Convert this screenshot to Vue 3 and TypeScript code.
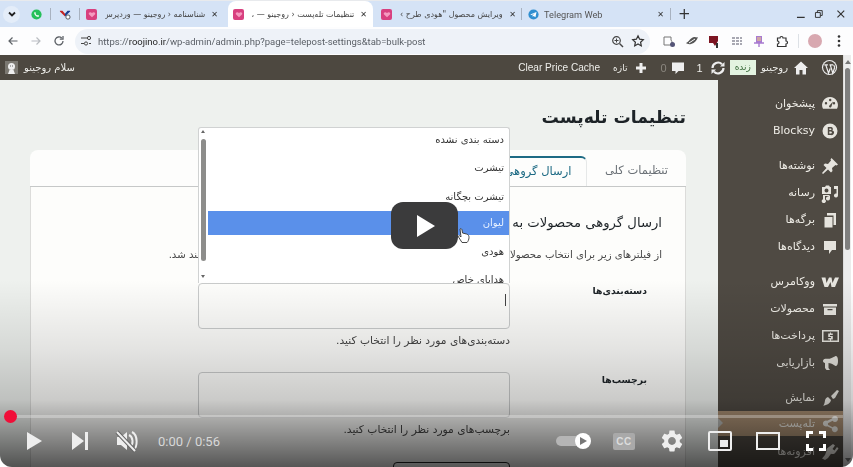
<script setup lang="ts">
interface MenuItem { label: string; d: string; active?: boolean; gap?: boolean }

const menu: MenuItem[] = [
  { label: 'پیشخوان', d: 'M10 3a8 8 0 0 0-7 11.800h14A8 8 0 0 0 10 3zM6 8a1.200 1.200 0 1 1 0 2.400A1.200 1.200 0 0 1 6 8zm3-2a1.200 1.200 0 1 1 2.400 0A1.200 1.200 0 0 1 9 6zm1.800 7.500a1.300 1.300 0 0 1-1.800-1.400L13 7.500l-1.500 5zM14 8a1.200 1.200 0 1 1 0 2.400A1.200 1.200 0 0 1 14 8z' },
  { label: 'Blocksy', d: 'M10 2.500a7.500 7.500 0 1 0 0 15 7.500 7.500 0 0 0 0-15zM7.800 6h3.200a2 2 0 0 1 1.300 3.400A2.200 2.200 0 0 1 11 14H7.800V6zm1.500 1.400v1.700h1.300a.85.85 0 0 0 0-1.700H9.300zm0 3v2.200h1.500a1.100 1.100 0 0 0 0-2.200H9.300z' },
  { label: 'نوشته‌ها', gap: true, d: 'M11.500 2l6.500 6.500-1.500 1-1-.5-3.500 3 .5 3-1.500 1.500-3-3L3 18l-1-1 4.500-5-3-3L5 7.500l3 .5 3-3.500-.5-1z' },
  { label: 'رسانه', d: 'M2 4h3l1-1.500h3L10 4h1v7H2V4zm4.500 1.500a2 2 0 1 0 0 4 2 2 0 0 0 0-4zM14 3h4v9.500a2 2 0 1 1-1.500-2V6H14V3zM3 12h6l1 1v2.500a2 2 0 1 1-1.500-2V13H5v3.500a2 2 0 1 1-2-.2V12z' },
  { label: 'برگه‌ها', d: 'M7 3h9v12h-2.500V5.500H7V3zM4.500 7h8v10.500h-8V7z' },
  { label: 'دیدگاه‌ها', d: 'M4 4h12v9h-4l-3 4v-4H4V4z' },
  { label: 'ووکامرس', gap: true, d: 'M1.500 5.500H5.500L6.500 11 9 5.500h2.500l1 5.500L15 5.500h4L15 15h-3.500l-1-5L8 15H4.500z' },
  { label: 'محصولات', d: 'M3 5h14v2.500H3V5zm1 3.500h12V16H4V8.500zm3.500 1.500v1.200h5V10h-5z' },
  { label: 'پرداخت‌ها', d: 'M2 4h17v12H2V4zm1.500 1.500v9h14v-9h-14zM10 6.500h1v1h1.800V9H10v1h2.800v3.500H11v1h-1v-1H8.200V12H11v-1H8.200V7.500H10v-1z' },
  { label: 'بازاریابی', d: 'M16 3c1.300 0 2 2.300 2 5s-.7 5-2 5c-1 0-4-2.700-7.500-3V15l1.500 2H6.500L5 15v-5C3.800 9.800 3 9 3 8s1-2.200 2.300-2.200h3.200C12 5.700 15 3 16 3z' },
  { label: 'نمایش', gap: true, d: 'M11 8l6-6 2 1-4 7-2 1-2-3zM8 9l3 3c-.5 3-4 5.500-8 5.500 1.500-1 1.500-2.500 2-5 .3-1.800 1.500-3 3-3.500z' },
  { label: 'تله‌پست', active: true, d: 'M15 2a3 3 0 1 1-2.400 4.800L7.900 9.200a3 3 0 0 1 0 1.600l4.700 2.400a3 3 0 1 1-.7 1.400l-4.700-2.400a3 3 0 1 1 0-5.400l4.700-2.400A3 3 0 0 1 15 2z' },
  { label: 'افزونه‌ها', d: 'M13 2l2 1.500-2.500 3.500 2 1.500L17 5l1.500 1.500-3 4c-1 1.500-3 2-4.500 1.200L8 16l-3 2-3-1.500L5 13l1.500-4c-.5-1 0-2 1-3L13 2z' },
]

const options: { label: string; selected?: boolean }[] = [
  { label: 'دسته بندی نشده' },
  { label: 'تیشرت' },
  { label: 'تیشرت بچگانه' },
  { label: 'لیوان', selected: true },
  { label: 'هودی' },
  { label: 'هدایای خاص' },
]
</script>

<template>
  <div class="root">
    <div class="screen">
      <div class="tabstrip">
        <span class="tablist-btn"><svg width="10" height="10" viewBox="0 0 10 10"><path d="M2 3.500l3 3 3-3" fill="none" stroke="#222" stroke-width="1.800" /></svg></span>
        <span class="pinned first">
          <svg width="11" height="11" viewBox="0 0 14 14"><circle cx="7" cy="7" r="6.500" fill="#25c05a" /><path d="M4.500 4c1-1 1.500.5 1.800 1.300l-.6.8c.5 1 1.200 1.700 2.200 2.200l.8-.7c.8.300 2.200 1 1.300 2-1.800 1.500-7.300-3-5.500-5.600z" fill="#fff" /></svg>
        </span>
        <span class="sep"></span>
        <span class="pinned">
          <svg width="12" height="11" viewBox="0 0 14 13"><path d="M1 11V2l3 0 3 3.500V9L1 3z" fill="#c5221f" /><path d="M13 11V2h-3L7 5.500V9l6-6z" fill="#1a3d8f" /><circle cx="10.500" cy="9.500" r="2.500" fill="#fff" stroke="#444" /></svg>
        </span>
        <span class="sep"></span>
        <div class="tab t1">
          <span class="fav"><svg width="8" height="7" viewBox="0 0 11 10"><path d="M5.500 9L1 4.500C0 2 3.500.5 5.500 3c2-2.500 5.500-1 4.500 1.500z" fill="#f59ac0" /></svg></span>
          <span class="tab-title">شناسنامه ‹ روجینو — وردپرس</span>
          <span class="x">✕</span>
        </div>
        <div class="tab active">
          <span class="fav"><svg width="8" height="7" viewBox="0 0 11 10"><path d="M5.500 9L1 4.500C0 2 3.500.5 5.500 3c2-2.500 5.500-1 4.500 1.500z" fill="#f59ac0" /></svg></span>
          <span class="tab-title">تنظیمات تله‌پست ‹ روجینو — ،</span>
          <span class="x">✕</span>
        </div>
        <div class="tab t3">
          <span class="fav"><svg width="8" height="7" viewBox="0 0 11 10"><path d="M5.500 9L1 4.500C0 2 3.500.5 5.500 3c2-2.500 5.500-1 4.500 1.500z" fill="#f59ac0" /></svg></span>
          <span class="tab-title">ویرایش محصول "هودی طرح ›</span>
          <span class="x">✕</span>
        </div>
        <span class="sep"></span>
        <div class="tab t4">
          <svg width="11" height="11" viewBox="0 0 14 14"><circle cx="7" cy="7" r="6.500" fill="#2f8fd0" /><path d="M2.800 7l8-3.200-1.300 6.700-2.300-1.700-1.200 1.200-.2-2.200 3.200-2.700-4 2.400z" fill="#fff" /></svg>
          <span class="tab-title ltr">Telegram Web</span>
          <span class="x">✕</span>
        </div>
        <span class="sep"></span>
        <span class="plus">+</span>
        <span class="winctl">
          <svg width="10" height="10" viewBox="0 0 10 10"><path d="M1 8.500h8" stroke="#333" stroke-width="1.300" /></svg>
          <svg width="10" height="10" viewBox="0 0 10 10"><path d="M1.500 3.500h5v5h-5zM3.500 3.500v-2h5v5h-2" fill="none" stroke="#333" /></svg>
          <svg width="10" height="10" viewBox="0 0 10 10"><path d="M1.500 1.500l7 7m0-7l-7 7" stroke="#333" stroke-width="1.200" /></svg>
        </span>
      </div>

      <div class="toolbar">
        <svg class="nav" width="14" height="14" viewBox="0 0 14 14"><path d="M11.500 7H3M6.500 3.500L3 7l3.500 3.500" fill="none" stroke="#5f6368" stroke-width="1.200" /></svg>
        <svg class="nav" width="14" height="14" viewBox="0 0 14 14"><path d="M2.500 7H11M7.500 3.500L11 7l-3.500 3.500" fill="none" stroke="#b9bcc1" stroke-width="1.200" /></svg>
        <svg class="nav" width="14" height="14" viewBox="0 0 14 14"><path d="M11 7A4 4 0 1 1 9.700 4M11 2v3.200H7.800" fill="none" stroke="#5f6368" stroke-width="1.300" /></svg>
        <div class="omnibox">
          <svg width="12" height="12" viewBox="0 0 12 12"><path d="M1 3h6M1 8.500h3M9 8.500h2" stroke="#444" stroke-width="1.200" /><circle cx="9" cy="3" r="1.600" fill="none" stroke="#444" /><circle cx="6" cy="8.500" r="1.600" fill="none" stroke="#444" /></svg>
          <span class="url">https://<b>roojino.ir</b>/wp-admin/admin.php?page=telepost-settings&amp;tab=bulk-post</span>
          <span class="omni-end">
            <svg width="13" height="13" viewBox="0 0 13 13"><circle cx="5.500" cy="5.500" r="3.800" fill="none" stroke="#444" stroke-width="1.200" /><path d="M8.500 8.500l3.500 3.500" stroke="#444" stroke-width="1.400" /><path d="M3.500 5.500h4M5.500 3.500v4" stroke="#444" /></svg>
            <svg width="14" height="14" viewBox="0 0 14 14"><path d="M7 1.800l1.600 3.400 3.700.5-2.700 2.500.7 3.700L7 10l-3.300 1.900.7-3.700L1.700 5.700l3.700-.5z" fill="none" stroke="#333" stroke-width="1.200" /></svg>
          </span>
        </div>
        <div class="exts">
          <svg width="14" height="14" viewBox="0 0 14 14"><path d="M2 3h7v3a3 3 0 0 1-3 5H2z" fill="none" stroke="#777" /><circle cx="10.500" cy="10.500" r="2.500" fill="#557" /></svg>
          <svg width="14" height="14" viewBox="0 0 14 14"><path d="M1 9c3-1 4-5 8-6 2 0 3 1 4 0-1 3-3 6-7 7-2 .5-4 0-5-1z" fill="#555" /><path d="M4 9l6-4" stroke="#fff" /></svg>
          <svg width="14" height="14" viewBox="0 0 14 14"><path d="M2 2h9v5l-3 5-2-3H2z" fill="#7d1522" /><rect x="9" y="9" width="2" height="5" fill="#333" /></svg>
          <svg width="14" height="14" viewBox="0 0 14 14"><path d="M2 4h10M2 7h10M2 10h10" stroke="#556" stroke-width="1.100" stroke-dasharray="3 1" /></svg>
          <svg width="14" height="14" viewBox="0 0 14 14"><path d="M4 2h6v7H4z" fill="#a87ad0" /><path d="M2 9h10M7 9v4" stroke="#a87ad0" stroke-width="1.400" /><path d="M5 4h4M5 6h4" stroke="#f4d37a" /></svg>
          <svg width="14" height="14" viewBox="0 0 14 14"><path d="M2.500 4H5a1.500 1.500 0 0 1 3 0h3v3a1.500 1.500 0 0 1 0 3v2.500H2.500V10a1.500 1.500 0 0 0 0-3z" fill="none" stroke="#333" stroke-width="1.200" /></svg>
        </div>
        <span class="tsep"></span>
        <span class="avatar"></span>
        <svg class="kebab" width="4" height="14" viewBox="0 0 4 14"><circle cx="2" cy="2.500" r="1.300" fill="#333" /><circle cx="2" cy="7" r="1.300" fill="#333" /><circle cx="2" cy="11.500" r="1.300" fill="#333" /></svg>
      </div>

      <div class="viewport">
        <div class="page">
          <div class="wpbar">
            <div class="wp-right">
              <svg class="wp-logo" width="17" height="17" viewBox="0 0 18 18"><circle cx="9" cy="9" r="8" fill="#eee" /><circle cx="9" cy="9" r="6.800" fill="#4d4840" /><path d="M3.500 6.200h3.800M9 6.200h4M5 6.200L8 15l1.700-5M9.800 6.200L12.500 15l1.800-5.500c.3-1.200-.2-2-.8-3" fill="none" stroke="#eee" stroke-width="1.300" /></svg>
              <svg class="home" width="16" height="16" viewBox="0 0 16 16"><path d="M8 1.500l7 6.500h-2v6.500H9.500V10h-3v4.500H3V8H1z" fill="#eee" /></svg>
              <span class="site">روجینو</span>
              <span class="live">زنده</span>
              <svg class="refresh" width="16" height="16" viewBox="0 0 16 16"><path d="M2.500 8a5.500 5.500 0 0 1 9.500-3.700M13.500 8A5.500 5.500 0 0 1 4 11.700" fill="none" stroke="#eee" stroke-width="2.200" /><path d="M14.500 2v4.500H10zM1.500 14V9.500H6z" fill="#eee" /></svg>
              <span class="count">1</span>
              <svg class="bubble" width="14" height="14" viewBox="0 0 14 14"><path d="M1 1.500h12v8.500H7.500L4.500 13v-3H1z" fill="#eee" /></svg>
              <span class="count zero">0</span>
              <svg class="plus-wp" width="14" height="14" viewBox="0 0 14 14"><path d="M7 2v10M2 7h10" stroke="#eee" stroke-width="3" /></svg>
              <span class="new">تازه</span>
              <span class="cache">Clear Price Cache</span>
            </div>
            <div class="wp-left">
              <span class="greet">سلام روجینو</span>
              <span class="wp-avatar"><svg width="13" height="13" viewBox="0 0 13 13"><rect width="13" height="13" fill="#7b7871" /><circle cx="6.500" cy="5.500" r="3.500" fill="#eee" /><path d="M3 13l1.500-4h4L10 13z" fill="#eee" /><path d="M5 5h.8M7.200 5H8" stroke="#444" /></svg></span>
            </div>
          </div>
          <div class="body">
            <main class="main">
              <h1 class="title">تنظیمات تله‌پست</h1>
              <div class="tabs">
                <span class="wptab">تنظیمات کلی</span>
                <span class="wptab on">ارسال گروهی</span>
              </div>
              <div class="card">
                <h2 class="h2">ارسال گروهی محصولات به تلگرام</h2>
                <p class="desc">از فیلترهای زیر برای انتخاب محصولات استفاده کنید. محصولات انتخاب‌شده خودکار به کانال تلگرام ارسال خواهند شد.</p>
                <div class="field">
                  <label class="flabel">دسته‌بندی‌ها</label>
                  <div class="fcontrol">
                    <div class="box"></div>
                    <p class="hint">دسته‌بندی‌های مورد نظر را انتخاب کنید.</p>
                  </div>
                </div>
                <div class="field">
                  <label class="flabel">برچسب‌ها</label>
                  <div class="fcontrol">
                    <div class="box"></div>
                    <p class="hint">برچسب‌های مورد نظر را انتخاب کنید.</p>
                    <div class="btnstub"></div>
                  </div>
                </div>
              </div>
            </main>
            <aside class="side">
              <div v-for="m in menu" :key="m.label" class="row" :class="{ gap: m.gap, on: m.active }">
                <svg class="mi" width="20" height="20" viewBox="0 0 20 20"><path :d="m.d" fill="#e6e4de" fill-rule="evenodd" /></svg>
                <span class="ml">{{ m.label }}</span>
              </div>
            </aside>
          </div>
        </div>
        <div class="sb">
          <span class="arr up"></span>
          <span class="thumb"></span>
          <span class="arr down"></span>
        </div>
      </div>

      <div class="dropdown">
        <div class="dd-sb">
          <span class="arr2 up"></span>
          <span class="thumb2"></span>
          <span class="arr2 down"></span>
        </div>
        <div class="dd-list">
          <div v-for="o in options" :key="o.label" class="opt" :class="{ sel: o.selected }">{{ o.label }}</div>
        </div>
      </div>
      <span class="caret"></span>
    </div>

    <div class="shade"></div>
    <div class="big-play"><svg width="20" height="22" viewBox="0 0 20 22"><path d="M1 0l18 11L1 22z" fill="#fff" /></svg></div>
    <svg class="hand" width="13" height="15" viewBox="0 0 13 15"><path d="M3 1c1-.8 1.800 0 2 1l.5 3 4 1c2 .5 2.500 2 2.500 3.500 0 2-1 4-2 5H5L1.500 9c-.5-1 .5-1.800 1.500-1L4 9z" fill="#fff" stroke="#333" stroke-width=".9" /></svg>

    <div class="progress"></div>
    <div class="scrubber"></div>
    <div class="controls">
      <div class="cgroup">
        <span class="cbtn"><svg width="36" height="36" viewBox="0 0 36 36"><path d="M11 9l15 9-15 9z" fill="#eee" /></svg></span>
        <span class="cbtn"><svg width="36" height="36" viewBox="0 0 36 36"><path d="M10 9l12 9-12 9z" fill="#eee" /><rect x="23" y="9" width="3" height="18" fill="#eee" /></svg></span>
        <span class="cbtn"><svg width="36" height="36" viewBox="0 0 36 36"><path d="M9 14h4l6-5v18l-6-5H9z" fill="#eee" /><path d="M21 12c4 2 5 9 1 12M24 9c6 3 6 15 1 19" fill="none" stroke="#eee" stroke-width="2" /><path d="M9 9l18 19" stroke="#666" stroke-width="4" /><path d="M9 9l18 19" stroke="#eee" stroke-width="2" /></svg></span>
        <span class="time">0:00 / 0:56</span>
      </div>
      <div class="cgroup">
        <span class="cbtn w"><span class="toggle"><span class="knob"><svg width="8" height="8" viewBox="0 0 8 8"><path d="M1 0l7 4-7 4z" fill="#777" /></svg></span></span></span>
        <span class="cbtn w"><span class="cc">CC</span></span>
        <span class="cbtn w"><svg width="26" height="26" viewBox="0 0 24 24"><path d="M19.140 12.940c.04-.3.06-.61.06-.94 0-.32-.02-.64-.07-.94l2.030-1.580c.18-.14.23-.41.12-.61l-1.920-3.320c-.12-.22-.37-.29-.59-.22l-2.390.96c-.5-.38-1.030-.7-1.620-.94l-.36-2.540c-.04-.24-.24-.41-.48-.41h-3.840c-.24 0-.43.17-.47.41l-.36 2.540c-.59.24-1.130.57-1.620.94l-2.390-.96c-.22-.08-.47 0-.59.22L2.740 8.870c-.12.21-.08.47.12.61l2.030 1.580c-.05.3-.09.63-.09.94s.02.64.07.94l-2.030 1.580c-.18.14-.23.41-.12.61l1.920 3.320c.12.22.37.29.59.22l2.390-.96c.5.38 1.030.7 1.620.94l.36 2.540c.05.24.24.41.48.41h3.840c.24 0 .44-.17.47-.41l.36-2.540c.59-.24 1.130-.56 1.620-.94l2.390.96c.22.08.47 0 .59-.22l1.920-3.320c.12-.22.07-.47-.12-.61l-2.010-1.580zM12 15.600c-1.980 0-3.600-1.620-3.600-3.600s1.620-3.600 3.600-3.600 3.600 1.620 3.600 3.600-1.620 3.600-3.600 3.600z" fill="#eee" /></svg></span>
        <span class="cbtn w"><svg width="24" height="20" viewBox="0 0 24 20"><rect x="1" y="1" width="22" height="18" rx="1" fill="none" stroke="#eee" stroke-width="2" /><rect x="12" y="9" width="8" height="7" fill="#eee" /></svg></span>
        <span class="cbtn w"><svg width="24" height="18" viewBox="0 0 24 18"><rect x="1" y="1" width="22" height="16" fill="none" stroke="#eee" stroke-width="2" /></svg></span>
        <span class="cbtn w"><svg width="20" height="20" viewBox="0 0 20 20"><path d="M1.500 7V1.500H7M13 1.500h5.500V7M18.500 13v5.500H13M7 18.500H1.500V13" fill="none" stroke="#fff" stroke-width="3" /></svg></span>
      </div>
    </div>
  </div>
</template>

<style scoped>
.root {
  position: relative;
  width: 853px;
  height: 467px;
  overflow: hidden;
  background: #fff;
  border-radius: 0 0 12px 12px;
  font-family: "DejaVu Sans", "Noto Sans", sans-serif;
}
.screen { width: 853px; height: 467px; filter: blur(0.45px); }
.tabstrip {
  height: 27px;
  background: #d5e3f6;
  border-top: 1px solid #e8eaed;
  box-sizing: border-box;
  display: flex;
  align-items: center;
  color: #333;
  font-size: 8px;
}
.tablist-btn { width: 17px; height: 17px; margin-left: 3px; background: #e4edf9; border-radius: 50%; display: flex; align-items: center; justify-content: center; }
.pinned { width: 28px; display: flex; justify-content: center; }
.pinned.first { margin-left: 2px; }
.sep { width: 1px; height: 12px; background: #a8b2c0; }
.tab { display: flex; align-items: center; height: 26px; box-sizing: border-box; }
.tab-title { flex: 1; direction: rtl; white-space: nowrap; overflow: hidden; text-align: left; color: #444; }
.tab-title.ltr { direction: ltr; font-family: Roboto, sans-serif; font-size: 9.200px; padding-left: 5px; }
.fav { flex: none; width: 11px; height: 11px; border-radius: 2px; background: #d8407f; display: flex; align-items: center; justify-content: center; margin-right: 8px; }
.x { font-size: 8px; color: #333; margin-left: 6px; }
.t1 { width: 148px; padding: 0 10px 0 6px; }
.active { width: 145px; background: #fff; border-radius: 8px 8px 0 0; padding: 0 6px 0 5px; }
.t3 { width: 148px; padding: 0 5px 0 8px; }
.t4 { width: 148px; padding: 0 6px; }
.t4 .tab-title { color: #555; }
.plus { margin-left: 7px; font-size: 15px; color: #333; }
.winctl { margin-left: auto; display: flex; gap: 8px; width: 50px; padding-right: 7px; justify-content: flex-end; }
.winctl svg:nth-child(2) { margin-right: 2px; }
.winctl svg:nth-child(3) { margin-left: 3px; }

.toolbar { height: 28px; background: #fdfdfe; display: flex; align-items: center; }
.nav { margin-left: 7px; margin-right: 2px; }
.toolbar .nav:nth-child(1) { margin-left: 6px; }
.omnibox {
  width: 575px;
  height: 25px;
  margin-left: 7px;
  border-radius: 13px;
  background: #eef2f8;
  display: flex;
  align-items: center;
  padding: 0 5px 0 5px;
  box-sizing: border-box;
  font-family: Roboto, sans-serif;
}
.url { margin-left: 6px; font-size: 9.500px; color: #5a5f66; white-space: nowrap; }
.url b { font-weight: 400; color: #1f1f1f; }
.omni-end { margin-left: auto; display: flex; gap: 7px; align-items: center; }
.exts { display: flex; gap: 8.600px; margin-left: 12px; }
.tsep { width: 1px; height: 14px; background: #dde1e6; margin-left: 9px; }
.avatar { width: 14px; height: 14px; border-radius: 50%; background: #d8a8b0; margin-left: 9px; }
.kebab { margin-left: 15px; }

.viewport { display: flex; height: 412px; }
.page { width: 843px; overflow: hidden; }
.wpbar {
  height: 25px;
  background: #4d4840;
  display: flex;
  flex-direction: row-reverse;
  justify-content: space-between;
  color: #eeeeea;
  font-size: 10px;
}
.wp-right { display: flex; flex-direction: row; direction: rtl; align-items: center; padding-right: 5px; }
.home { margin-right: 12px; }
.site { margin-right: 5px; }
.live { margin-right: 5px; background: #e3f3e0; color: #3a6b3a; font-size: 9px; padding: 1px 5px; line-height: 13px; }
.refresh { margin-right: 4px; }
.count { margin-right: 7px; font-family: "Liberation Sans", sans-serif; font-size: 11px; }
.bubble { margin-right: 12px; }
.count.zero { margin-right: 4px; color: #8b877f; }
.plus-wp { margin-right: 12px; }
.new { margin-right: 7px; font-size: 9px; }
.cache { margin-right: 13px; font-family: "Liberation Sans", sans-serif; font-size: 10.100px; direction: ltr; }
.wp-left { display: flex; align-items: center; direction: rtl; padding-left: 5px; }
.wp-avatar { margin-right: 6px; line-height: 0; }
.greet { font-size: 10px; }

.body { display: flex; height: 387px; }
.main { width: 718px; box-sizing: border-box; padding: 23px 32px 0 30px; background: #eef1ee; direction: rtl; flex: none; }
.title { margin: 0 0 19px; font-size: 17.200px; line-height: 28px; font-weight: 700; color: #1d2327; }
.tabs { display: flex; height: 37px; box-sizing: border-box; background: #fdfdfc; border-radius: 8px 8px 0 0; border-bottom: 1px solid #c6c8c8; }
.wptab { width: 99px; margin-top: 6px; text-align: center; line-height: 29px; font-size: 11.500px; color: #6a7076; }
.wptab.on { width: 97px; color: #1d6a84; border-top: 2px solid #1d6a84; border-right: 1px solid #e6e8e8; box-sizing: border-box; line-height: 26px; border-radius: 0 6px 0 0; white-space: nowrap; }
.card { background: #fdfdfb; padding: 24px 23px 0 24px; height: 300px; box-sizing: border-box; border-left: 1px solid #dcdcda; border-right: 1px solid #dcdcda; }
.h2 { margin: 0; font-size: 13.200px; line-height: 24px; font-weight: 400; color: #1d2327; white-space: nowrap; }
.desc { margin: 10px 0 20px; font-size: 10.150px; line-height: 20px; height: 18px; color: #444; white-space: nowrap; }
.field { display: flex; margin-right: 15px; margin-bottom: 22px; }
.flabel { width: 137px; flex: none; font-size: 9.300px; line-height: 16px; font-weight: 700; color: #1d2327; }
.fcontrol { width: 312px; }
.box { height: 46px; box-sizing: border-box; border: 1px solid #c9cbcb; border-radius: 4px; background: #fdfdfb; }
.hint { margin: 3px 0 0; font-size: 10.700px; line-height: 18px; color: #444; white-space: nowrap; }
.btnstub { width: 117px; height: 30px; margin-top: 23px; border: 1px solid #222; border-radius: 4px; box-sizing: border-box; }

.side { width: 125px; flex: none; background: #4f4a43; padding-top: 10px; box-sizing: border-box; }
.row { height: 27px; display: flex; direction: rtl; align-items: center; padding-right: 3px; color: #eeece6; position: relative; }
.row.gap { margin-top: 8px; }
.mi { margin-left: 5px; flex: none; }
.ml { font-size: 11px; }
.row.on { background: #a98f73; height: 25px; margin-bottom: 2px; }
.row.on::before { content: ""; position: absolute; left: 0; top: 7px; border: 5px solid transparent; border-left-color: #b8b9b6; }

.sb { width: 8px; background: #ececec; position: relative; flex: none; border-left: 1px solid #ddd; box-sizing: border-box; }
.thumb { position: absolute; left: 1px; right: 1px; top: 13px; height: 182px; background: #7f7f7f; border-radius: 3px; }
.arr { position: absolute; left: 1px; border: 3px solid transparent; }
.arr.up { top: 2px; border-bottom: 4px solid #777; }
.arr.down { bottom: 2px; border-top: 4px solid #777; }

.dropdown {
  position: absolute;
  left: 198px;
  top: 127px;
  width: 312px;
  height: 156px;
  background: #fff;
  border: 1px solid #d0d2d2;
  border-bottom: 0;
  border-radius: 3px 3px 0 0;
  box-sizing: border-box;
  overflow: hidden;
  display: flex;
}
.dd-sb { width: 9px; position: relative; flex: none; }
.thumb2 { position: absolute; left: 2px; top: 11px; width: 5px; height: 122px; background: #8d8d8b; border-radius: 3px; }
.arr2 { position: absolute; left: 2px; border: 2.500px solid transparent; }
.arr2.up { top: 0; border-bottom: 3px solid #666; }
.arr2.down { top: 147px; border-top: 3px solid #666; }
.dd-list { flex: 1; direction: rtl; margin-top: -1px; }
.opt { height: 28.300px; line-height: 26px; padding-right: 5px; font-size: 10px; color: #333; }
.opt.sel { background: #5a90ea; color: #e6f0ff; height: 24px; line-height: 24px; margin: -1px 0 4.300px; }
.caret { position: absolute; left: 505px; top: 294px; width: 1px; height: 12px; background: #444; }

.shade {
  position: absolute;
  inset: 0;
  background: linear-gradient(to bottom, rgba(0,0,0,0) 280px, rgba(0,0,0,.1) 350px, rgba(0,0,0,.2) 400px, rgba(0,0,0,.42) 432px, rgba(0,0,0,.66) 467px);
}
.big-play {
  position: absolute;
  left: 391px;
  top: 202px;
  width: 67px;
  height: 47px;
  border-radius: 12px;
  background: #3b3b3c;
  display: flex;
  align-items: center;
  justify-content: center;
  padding-left: 2px;
  box-sizing: border-box;
}
.hand { position: absolute; left: 457px; top: 228px; }
.progress { position: absolute; left: 10px; right: 10px; top: 415px; height: 3px; background: rgba(255,255,255,.28); }
.scrubber { position: absolute; left: 4px; top: 410px; width: 13px; height: 13px; border-radius: 50%; background: #f00e38; }
.controls { position: absolute; left: 11px; right: 13px; top: 418px; height: 46px; display: flex; justify-content: space-between; }
.cgroup { display: flex; align-items: center; }
.cbtn { width: 46px; height: 46px; display: flex; align-items: center; justify-content: center; }
.cbtn.w { width: 48px; }
.time { margin-left: 9px; font-family: Roboto, sans-serif; font-size: 13px; color: #d8d8d8; }
.toggle { width: 34px; height: 10px; background: #b5b5b5; border-radius: 5px; position: relative; display: block; margin-right: 6px; }
.knob { position: absolute; right: -1px; top: -3px; width: 16px; height: 16px; background: #fff; border-radius: 50%; display: flex; align-items: center; justify-content: center; }
.cc { width: 22px; height: 17px; background: #a9a9a9; border-radius: 2px; color: #dcdcdc; font: 700 10px/17px "Liberation Sans", sans-serif; text-align: center; letter-spacing: .5px; }
</style>
